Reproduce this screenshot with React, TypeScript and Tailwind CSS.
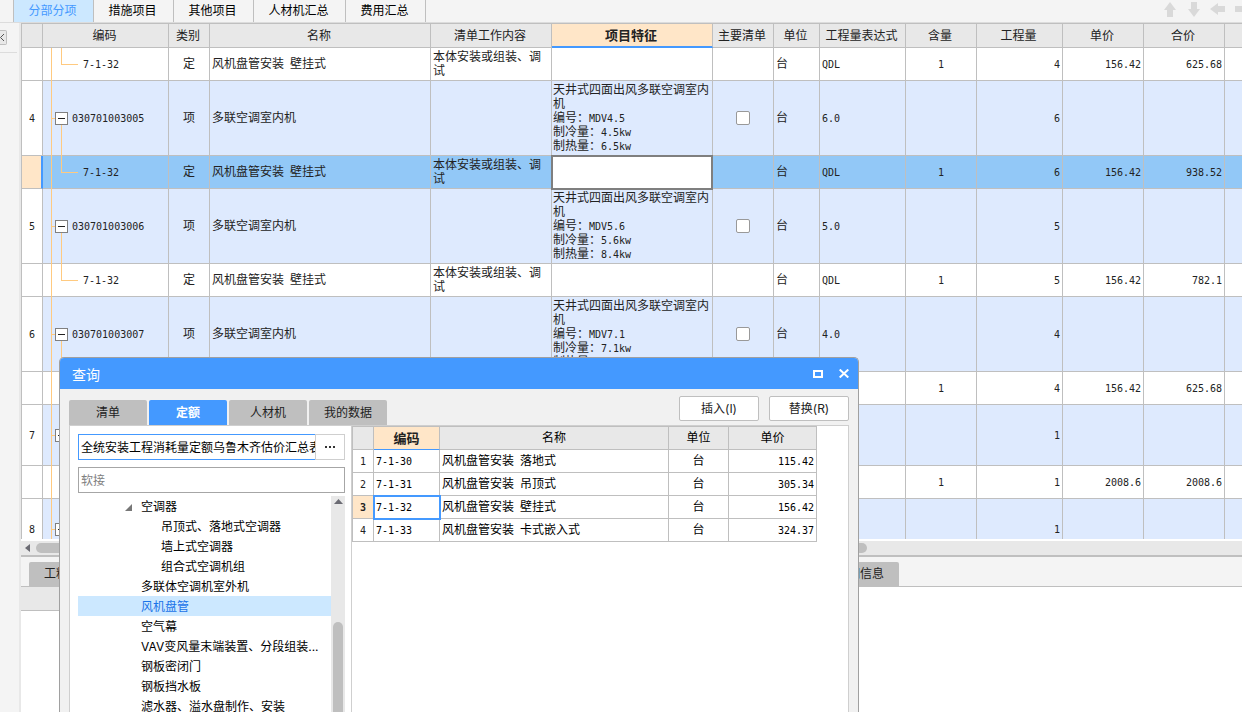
import clsx from "clsx";
import { Fragment } from "react";

type Row = {
  no?: string;
  code?: string;
  kind: "item" | "quota";
  name?: string;
  work?: string;
  feature?: string[];
  unit?: string;
  expr?: string;
  content?: string;
  qty?: string;
  price?: string;
  total?: string;
  height: string;
  selected?: boolean;
};

const WORK = "本体安装或组装、调试";
const ITEM_NAME = "多联空调室内机";
const QUOTA_NAME = "风机盘管安装 壁挂式";
const FEATURE_TITLE = "天井式四面出风多联空调室内机";

const quota = {
  kind: "quota" as const,
  code: "7-1-32",
  name: QUOTA_NAME,
  work: WORK,
  unit: "台",
  expr: "QDL",
  content: "1",
  height: "h-[33px]",
};

const item = {
  kind: "item" as const,
  name: ITEM_NAME,
  unit: "台",
  height: "h-[75px]",
};

const rows: Row[] = [
  { ...quota, qty: "4", price: "156.42", total: "625.68" },
  {
    ...item,
    no: "4",
    code: "030701003005",
    feature: [FEATURE_TITLE, "编号：MDV4.5", "制冷量：4.5kw", "制热量：6.5kw"],
    expr: "6.0",
    qty: "6",
  },
  { ...quota, qty: "6", price: "156.42", total: "938.52", selected: true },
  {
    ...item,
    no: "5",
    code: "030701003006",
    feature: [FEATURE_TITLE, "编号：MDV5.6", "制冷量：5.6kw", "制热量：8.4kw"],
    expr: "5.0",
    qty: "5",
  },
  { ...quota, qty: "5", price: "156.42", total: "782.1" },
  {
    ...item,
    no: "6",
    code: "030701003007",
    feature: [FEATURE_TITLE, "编号：MDV7.1", "制冷量：7.1kw", "制热量：8.0kw"],
    expr: "4.0",
    qty: "4",
  },
  { ...quota, qty: "4", price: "156.42", total: "625.68" },
  { kind: "item", no: "7", qty: "1", height: "h-[61px]" },
  {
    kind: "quota",
    content: "1",
    qty: "1",
    price: "2008.6",
    total: "2008.6",
    height: "h-[33px]",
  },
  { kind: "item", no: "8", qty: "1", height: "h-[61px]" },
];

const columns = [
  { title: "", width: "w-[21px]" },
  { title: "编码", width: "w-[126px]" },
  { title: "类别", width: "w-[41px]" },
  { title: "名称", width: "w-[221px]" },
  { title: "清单工作内容", width: "w-[121px]" },
  { title: "项目特征", width: "w-[161px]", active: true },
  { title: "主要清单", width: "w-[61px]" },
  { title: "单位", width: "w-[46px]" },
  { title: "工程量表达式", width: "w-[86px]" },
  { title: "含量", width: "w-[71px]" },
  { title: "工程量", width: "w-[86px]" },
  { title: "单价", width: "w-[81px]" },
  { title: "合价", width: "w-[81px]" },
  { title: "", width: "" },
];

const pageTabs = [
  { label: "分部分项", width: "w-[80px]" },
  { label: "措施项目", width: "w-[80px]" },
  { label: "其他项目", width: "w-[80px]" },
  { label: "人材机汇总", width: "w-[92px]" },
  { label: "费用汇总", width: "w-[80px]" },
];

const treeNodes = [
  { label: "空调器", depth: 1, open: true },
  { label: "吊顶式、落地式空调器", depth: 2 },
  { label: "墙上式空调器", depth: 2 },
  { label: "组合式空调机组", depth: 2 },
  { label: "多联体空调机室外机", depth: 1 },
  { label: "风机盘管", depth: 1, selected: true },
  { label: "空气幕", depth: 1 },
  { label: "VAV变风量末端装置、分段组装...", depth: 1 },
  { label: "钢板密闭门", depth: 1 },
  { label: "钢板挡水板", depth: 1 },
  { label: "滤水器、溢水盘制作、安装", depth: 1 },
];

const results = [
  { code: "7-1-30", name: "风机盘管安装 落地式", price: "115.42" },
  { code: "7-1-31", name: "风机盘管安装 吊顶式", price: "305.34" },
  { code: "7-1-32", name: "风机盘管安装 壁挂式", price: "156.42" },
  { code: "7-1-33", name: "风机盘管安装 卡式嵌入式", price: "324.37" },
];

// Latin runs are half as wide as a Chinese character in the grids
function GridText({ children = "" }: { children?: string }) {
  return (
    <>
      {children.split(/([\x20-\x7e]+)/).map((part, i) =>
        i % 2 ? (
          <span
            key={i}
            className="font-['DejaVu_Sans_Mono',monospace] text-[10px] leading-[10px] whitespace-pre"
          >
            {part}
          </span>
        ) : (
          <Fragment key={i}>{part}</Fragment>
        ),
      )}
    </>
  );
}

function ArrowIcon({ d, wide }: { d: string; wide?: boolean }) {
  return (
    <svg
      className={clsx("shrink-0 fill-[#d9d9d9]", wide ? "h-3 w-[15px]" : "h-[15px] w-3")}
      viewBox={wide ? "0 0 15 12" : "0 0 12 15"}
    >
      <path d={d} />
    </svg>
  );
}

function PageTabs() {
  return (
    <header className="flex h-[23px] shrink-0 border-b border-[#dcdcdc] bg-[#f4f4f4] pl-[13px]">
      <nav className="flex border-l border-[#bfbfbf]">
        {pageTabs.map((tab, i) => (
          <button
            key={tab.label}
            className={clsx(
              "border-r border-[#bfbfbf] pr-[2px] text-center text-xs",
              tab.width,
              i === 0 ? "bg-[#cce8ff] text-[#4499ff]" : "text-black",
            )}
          >
            {tab.label}
          </button>
        ))}
      </nav>
      <div className="-mr-2 ml-auto flex items-center gap-[10px] pb-1">
        <button aria-label="上移" className="mr-[2px]">
          <ArrowIcon d="M6 0 12 8H9V15H3V8H0Z" />
        </button>
        <button aria-label="下移">
          <ArrowIcon d="M6 15 12 7H9V0H3V7H0Z" />
        </button>
        <button aria-label="左移">
          <ArrowIcon wide d="M0 6 8 0V3H15V9H8V12Z" />
        </button>
        <button aria-label="右移">
          <ArrowIcon wide d="M15 6 7 0V3H0V9H7V12Z" />
        </button>
      </div>
    </header>
  );
}

function CodeCell({ row }: { row: Row }) {
  return (
    <div className={clsx("-mb-px flex items-center", row.height)}>
      <div className="h-full w-[9px] shrink-0 border-r border-[#ffca80]" />
      <div className="flex h-full shrink-0">
        {row.kind === "item" ? (
          <>
            <div className="w-[3px] self-center border-t border-[#ffca80]" />
            <div className="flex h-full w-[13px] flex-col items-center">
              <div className="flex-1" />
              <button
                aria-label="折叠"
                className="flex size-[13px] items-center justify-center border border-[#808080] bg-white"
              >
                <span className="h-px w-[7px] bg-[#222]" />
              </button>
              <div className="w-px flex-1 bg-[#ffca80]" />
            </div>
          </>
        ) : (
          <div className="ml-[9px] h-1/2 w-[17px] border-b border-l border-[#ffca80]" />
        )}
      </div>
      <span className={clsx("pb-[2px]", row.kind === "item" ? "ml-1" : "ml-[5px]")}>
        <GridText>{row.code}</GridText>
      </span>
    </div>
  );
}

function BillTable() {
  const cell = "border-r border-b border-[#bfbfbf] pt-0 pr-[2px] pb-px pl-[2px]";
  return (
    <table className="w-full table-fixed border-separate border-spacing-0 text-xs leading-[14px] text-[#222]">
      <thead>
        <tr className="h-[25px]">
          {columns.map((col, i) => (
            <th
              key={i}
              className={clsx(
                "border-t border-r border-b border-[#bfbfbf] py-0 pr-[2px] pl-0 last:border-r-0",
                col.width,
                col.active
                  ? "border-b-2 border-b-[#4499ff] bg-[#ffe6c8] text-[13px] font-bold"
                  : "bg-[#e8e8e8] font-normal",
              )}
            >
              {col.title}
            </th>
          ))}
        </tr>
      </thead>
      <tbody>
        {rows.map((row, i) => (
          <tr
            key={i}
            className={clsx(
              row.height,
              row.selected
                ? "bg-[#92c8f7]"
                : row.kind === "item"
                  ? "bg-[#deeafe]"
                  : "bg-white",
            )}
          >
            <td
              className={clsx(
                "border-b border-[#bfbfbf] p-0 text-center",
                row.selected
                  ? "border-r-2 border-r-[#4499ff] bg-[#ffe6c8]"
                  : "border-r bg-white",
              )}
            >
              <GridText>{row.no}</GridText>
            </td>
            <td className="border-r border-b border-[#bfbfbf] p-0">
              <CodeCell row={row} />
            </td>
            <td className={clsx(cell, "text-center")}>
              {row.code && (row.kind === "item" ? "项" : "定")}
            </td>
            <td className={cell}>
              <GridText>{row.name}</GridText>
            </td>
            <td className={cell}>{row.work}</td>
            {row.selected ? (
              <td className="border-r border-b border-[#bfbfbf] p-0">
                <input
                  aria-label="项目特征"
                  className="relative -mb-px block h-[33px] w-full bg-white px-1 outline-2 -outline-offset-1 outline-[#7f7f7f]"
                />
              </td>
            ) : (
              <td className="border-r border-b border-[#bfbfbf] py-0 pr-0 pl-px">
                {row.feature?.map((line) => (
                  <div key={line}>
                    <GridText>{line}</GridText>
                  </div>
                ))}
              </td>
            )}
            <td className="border-r border-b border-[#bfbfbf] p-0">
              {row.feature && (
                <input
                  type="checkbox"
                  aria-label="主要清单"
                  className="mx-auto block size-[14px] appearance-none rounded-xs border border-[#999] bg-white"
                />
              )}
            </td>
            <td className={cell}>{row.unit}</td>
            <td className={cell}>
              <GridText>{row.expr}</GridText>
            </td>
            <td className={clsx(cell, "text-center")}>
              <GridText>{row.content}</GridText>
            </td>
            <td className={clsx(cell, "text-right")}>
              <GridText>{row.qty}</GridText>
            </td>
            <td className={clsx(cell, "text-right")}>
              <GridText>{row.price}</GridText>
            </td>
            <td className={clsx(cell, "text-right")}>
              <GridText>{row.total}</GridText>
            </td>
            <td className="border-b border-[#bfbfbf] p-0" />
          </tr>
        ))}
      </tbody>
    </table>
  );
}

function BottomPanel() {
  return (
    <section className="h-[157px] shrink-0 border-t-2 border-[#bfbfbf] bg-white">
      <div className="flex h-[30px] items-end border-b border-[#bfbfbf] bg-[#f4f4f4] pl-2">
        <div className="flex w-[870px] justify-between text-xs text-[#222]">
          <button className="h-6 rounded-t-xs bg-[#bfbfbf] px-[15px]">工料机显示</button>
          <button className="h-6 rounded-t-xs bg-[#bfbfbf] px-[15px]">说明信息</button>
        </div>
      </div>
      <div className="h-6 w-1/2 border-b border-[#bfbfbf] bg-[#e8e8e8]" />
    </section>
  );
}

function SearchPane() {
  return (
    <div className="flex w-[282px] shrink-0 flex-col border-r border-[#cfcfcf] pt-2 pr-[6px] pl-2">
      <div className="flex h-[26px] shrink-0">
        <input
          aria-label="定额库"
          defaultValue="全统安装工程消耗量定额乌鲁木齐估价汇总表"
          className="min-w-0 flex-1 border border-r-0 border-[#4499ff] pt-[2px] pl-[2px] text-xs text-black outline-none"
        />
        <button
          aria-label="选择定额库"
          className="flex w-[30px] items-center justify-center gap-[2px] border border-[#cfcfcf] bg-white"
        >
          <span className="size-[2px] bg-[#333]" />
          <span className="size-[2px] bg-[#333]" />
          <span className="size-[2px] bg-[#333]" />
        </button>
      </div>
      <input
        aria-label="搜索"
        placeholder="软接"
        className="mt-[7px] h-[26px] shrink-0 border border-[#a6a6a6] pt-px pl-[2px] text-xs outline-none placeholder:text-[#808080]"
      />
      <div className="mt-[3px] flex min-h-0 flex-1">
        <ul className="min-w-0 flex-1 text-xs text-black">
          {treeNodes.map((node) => (
            <li
              key={node.label}
              className={clsx(
                "flex h-5 items-center pt-[2px] whitespace-nowrap",
                node.depth === 1 ? "pl-[47px]" : "pl-[67px]",
                node.selected && "bg-[#cce8ff] text-[#1a73e8]",
              )}
            >
              <svg className="mr-[9px] size-[7px] shrink-0 fill-[#777]" viewBox="0 0 7 7">
                {node.open && <path d="M7 0V7H0Z" />}
              </svg>
              {node.label}
            </li>
          ))}
        </ul>
        <div className="flex w-[14px] flex-col items-center bg-[#e8e8e8]">
          <svg className="mt-[3px] h-[5px] w-[9px] fill-[#6b6b73]" viewBox="0 0 9 5">
            <path d="M4.500 0 9 5H0Z" />
          </svg>
          <div className="mt-[118px] w-[10px] flex-1 rounded-t-full bg-[#bfbfbf]" />
        </div>
      </div>
    </div>
  );
}

function ResultTable() {
  const cell = "border-r border-b border-[#bfbfbf] pt-0 pr-[2px] pb-px pl-[2px]";
  const head = "border-r border-b border-[#bfbfbf] bg-[#e8e8e8] p-0 font-normal";
  return (
    <table className="w-[465px] table-fixed border-separate border-spacing-0 self-start border-t border-l border-[#bfbfbf] text-xs leading-[14px] text-black">
      <thead>
        <tr className="h-[23px]">
          <th className={clsx(head, "w-[21px]")} />
          <th className="w-[66px] border-r border-b border-[#bfbfbf] border-b-[#4499ff] bg-[#ffe6c8] p-0 text-[13px] font-bold text-[#222]">
            编码
          </th>
          <th className={clsx(head, "w-[229px]")}>名称</th>
          <th className={clsx(head, "w-[60px]")}>单位</th>
          <th className={head}>单价</th>
        </tr>
      </thead>
      <tbody>
        {results.map((r, i) => {
          const selected = i === 2;
          return (
            <tr key={r.code} className="h-[23px] bg-white">
              <td
                className={clsx(
                  "border-r border-b border-[#bfbfbf] p-0 text-center text-[#222]",
                  selected && "bg-[#ffe6c8] font-bold",
                )}
              >
                <GridText>{String(i + 1)}</GridText>
              </td>
              <td
                className={clsx(
                  cell,
                  selected && "relative outline-2 -outline-offset-1 outline-[#4499ff]",
                )}
              >
                <GridText>{r.code}</GridText>
              </td>
              <td className={cell}>
                <GridText>{r.name}</GridText>
              </td>
              <td className={clsx(cell, "text-center")}>台</td>
              <td className={clsx(cell, "text-right")}>
                <GridText>{r.price}</GridText>
              </td>
            </tr>
          );
        })}
      </tbody>
    </table>
  );
}

function QueryDialog() {
  const tabs = ["清单", "定额", "人材机", "我的数据"];
  return (
    <div
      role="dialog"
      aria-label="查询"
      className="absolute top-[357px] bottom-0 left-[59px] flex w-[800px] flex-col overflow-hidden rounded-t-[5px] border border-b-0 border-[#a0a0a0] bg-[#f1f1f1]"
    >
      <div className="flex h-[31px] shrink-0 items-center bg-[#4499ff] pr-[9px] pl-3 text-white">
        <h2 className="mt-[2px] text-sm">查询</h2>
        <button aria-label="最大化" className="mr-4 ml-auto">
          <svg className="h-2 w-[10px]" viewBox="0 0 10 8" fill="none" stroke="#fff" strokeWidth="2">
            <path d="M1 1H9V7H1Z" />
          </svg>
        </button>
        <button aria-label="关闭">
          <svg className="h-[9px] w-[10px]" viewBox="0 0 10 9" stroke="#fff" strokeWidth="2">
            <path d="M0.700 0.500 9.300 8.500M9.300 0.500 0.700 8.500" />
          </svg>
        </button>
      </div>
      <div className="flex h-9 shrink-0 items-end gap-[2px] px-[9px] text-xs text-[#222]">
        {tabs.map((tab) => (
          <button
            key={tab}
            className={clsx(
              "h-[25px] w-[78px] rounded-t-xs",
              tab === "定额" ? "bg-[#4499ff] font-bold text-white" : "bg-[#bfbfbf]",
            )}
          >
            {tab}
          </button>
        ))}
        <div className="mb-1 ml-auto flex gap-[10px]">
          <button className="h-[25px] w-[80px] rounded-xs border border-[#bfbfbf] bg-white">
            插入(I)
          </button>
          <button className="h-[25px] w-[80px] rounded-xs border border-[#bfbfbf] bg-white">
            替换(R)
          </button>
        </div>
      </div>
      <div className="mx-[9px] flex min-h-0 flex-1 overflow-hidden border border-b-0 border-[#cfcfcf] bg-white">
        <SearchPane />
        <ResultTable />
      </div>
    </div>
  );
}

export default function App() {
  return (
    <div
      lang="zh-CN"
      className="relative flex h-screen flex-col overflow-hidden bg-white font-['Inter','Noto_Sans_CJK_SC',sans-serif]"
    >
      <PageTabs />
      <div className="flex min-h-0 flex-1">
        <aside className="w-[21px] shrink-0 border-r-2 border-[#e8e8e8] bg-[#f4f4f4]">
          <div className="mr-[2px] h-[30px] border-b border-[#dcdcdc] pt-[7px]">
            <button
              aria-label="收起"
              className="flex h-[15px] w-[7px] items-center rounded-r-xs border border-l-0 border-[#bfbfbf] bg-[#e8e8e8]"
            >
              <svg className="h-[7px] w-1" viewBox="0 0 4 7" fill="none" stroke="#555">
                <path d="M4 0 0.500 3.500 4 7" />
              </svg>
            </button>
          </div>
        </aside>
        <main className="flex min-w-0 flex-1 flex-col">
          <div className="mb-[2px] min-h-0 flex-1 overflow-hidden border-l border-[#bfbfbf]">
            <BillTable />
          </div>
          <div className="flex h-[14px] shrink-0 items-center bg-[#e8e8e8] pl-1">
            <svg className="mr-[6px] h-2 w-[5px] fill-[#6b6b73]" viewBox="0 0 5 8">
              <path d="M5 0V8L0 4Z" />
            </svg>
            <div className="h-[10px] w-[831px] rounded-full bg-[#bfbfbf]" />
          </div>
          <BottomPanel />
        </main>
      </div>
      <QueryDialog />
    </div>
  );
}
